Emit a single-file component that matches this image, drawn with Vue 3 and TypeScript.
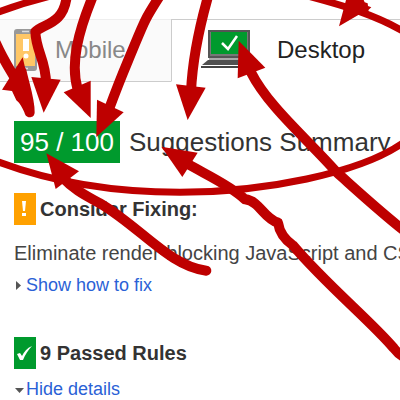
<script setup lang="ts">
import { ref } from 'vue'

type Tab = 'mobile' | 'desktop'

const active = ref<Tab>('desktop')
const score = 95
const passedRules = 9

const strokes: string[] = [
  'M-12 130 C15 190 35 215 60 262',
  'M55 270 C60 290 80 310 89 337 C90 300 72 250 65 215',
  'M200 -10 C190 75 130 70 106 95 C108 155 138 180 138 250',
  'M278 -10 C235 95 210 190 233 268',
  'M478 -10 C430 65 435 60 385 180 C365 228 350 265 328 325',
  'M624 -10 C600 75 578 165 573 275',
  'M619 812 C510 800 420 680 300 610 C265 590 225 573 185 530',
  'M560 490 C610 520 690 555 735 598 C780 603 790 655 834 668 C840 710 870 730 880 737 C975 850 1120 970 1181 1044 Q1195 1062 1210 1070',
  'M752 215 C805 320 920 415 1010 517 C1075 575 1140 635 1210 690',
]

const heads: string[] = [
  '68,172 6,269 36,273 49,301 75,325 102,320',
  '94,231 182,239 131,338',
  '191,277 272,242 272,354',
  '291,299 371,337 289,411',
  '528,253 617,263 563,360',
  '139,460 237,514 167,567',
  '484,440 593,458 547,531',
  '716,122 796,203 713,235',
  '1038,0 1091,0 1094,7 1103,10 1104,18 1114,22 1106,29 1104,38 1080,42 1017,79',
]
</script>

<template>
  <main class="page">
    <nav class="tabs" aria-label="Device">
      <button class="tab mobile" :class="{ active: active === 'mobile' }" type="button" @click="active = 'mobile'">
        <svg class="phone" viewBox="0 0 23 42" aria-hidden="true">
          <rect width="23" height="42" rx="3" fill="#999" />
          <rect x="2" y="5" width="19" height="32" fill="#ffc766" />
          <path d="M8 2.5h7" stroke="#ddd" stroke-width="1.5" />
          <path d="M9 39.5h5" stroke="#ddd" stroke-width="1.5" />
          <path d="M9 10h6v12h-6z" fill="#fff" />
          <circle cx="12" cy="27" r="2.5" fill="#fff" />
        </svg>
        <span>Mobile</span>
      </button>
      <button class="tab desktop" :class="{ active: active === 'desktop' }" type="button" @click="active = 'desktop'">
        <svg class="laptop" viewBox="0 0 52 40" aria-hidden="true">
          <path d="M7 0h42v28H7z" fill="#555" />
          <path d="M9 2h38v24H9z" fill="#777" />
          <path d="M10 2h36v22H10z" fill="#009a2d" />
          <path d="M8 28h40v2H8z" fill="#aaa" />
          <path d="M7 30h43l2 5H1z" fill="#505050" />
          <path d="M0 36h52v2H0z" fill="#444" />
          <path d="M21 13l6 6L36 6" fill="none" stroke="#fff" stroke-width="2.5" />
        </svg>
        <span>Desktop</span>
      </button>
    </nav>

    <section class="report">
      <h1 class="summary">
        <span class="score">{{ score }} / 100</span>
        <span>Suggestions Summary</span>
      </h1>

      <h2 class="group">
        <svg class="badge" viewBox="0 0 22 32" aria-hidden="true">
          <path d="M0 0h22v32H0z" fill="#ffa100" />
          <path d="M8 8h4l-1 10H9z" fill="#fff" />
          <path d="M8 20h4v3H8z" fill="#fff" />
        </svg>
        <span>Consider Fixing:</span>
      </h2>
      <p class="rule">Eliminate render-blocking JavaScript and CS</p>
      <button class="toggle" type="button">
        <svg viewBox="0 0 10 12" aria-hidden="true"><path d="M2 2l5 4.5L2 11z" fill="#555" /></svg>
        <span>Show how to fix</span>
      </button>

      <h2 class="group passed">
        <svg class="badge" viewBox="0 0 22 32" aria-hidden="true">
          <path d="M0 0h22v32H0z" fill="#009a2d" />
          <path d="M3 17l3-1 2 3C10 15 13 11 18 9C14 13 11 18 9 23H6z" fill="#fff" />
        </svg>
        <span>{{ passedRules }} Passed Rules</span>
      </h2>
      <button class="toggle" type="button">
        <svg viewBox="0 0 10 12" aria-hidden="true"><path d="M1 5h9L5.5 10z" fill="#555" /></svg>
        <span>Hide details</span>
      </button>
    </section>

    <svg class="marks" viewBox="0 0 1200 1200" aria-hidden="true">
      <g fill="none" stroke="#be0000" stroke-linecap="round" stroke-linejoin="round">
        <path d="M-10 38Q65 10 145 -10M930 -10C1035 18 1125 45 1210 94M-10 484C150 545 330 577 540 577C790 577 1080 520 1210 428" stroke-width="21" />
        <path v-for="d in strokes" :key="d" :d="d" stroke-width="30" />
      </g>
      <polygon v-for="p in heads" :key="p" :points="p" fill="#be0000" />
    </svg>
  </main>
</template>

<style>
body {
  margin: 0;
  background: #fff;
}
</style>

<style scoped>
.page {
  position: relative;
  overflow: hidden;
  padding-top: 19px;
  font-family: "Liberation Sans", Arial, sans-serif;
  color: #333;
}

button {
  margin: 0;
  border: 0;
  background: none;
  font-family: inherit;
  cursor: pointer;
}

.tabs {
  display: flex;
}

.tab {
  display: flex;
  align-items: center;
  height: 63px;
  box-sizing: border-box;
  padding: 0 0 2px 14px;
  border-top: 1px solid #eee;
  border-bottom: 1px solid #ccc;
  background: #fafafa;
  color: #888;
  font-size: 24px;
  line-height: 28px;
}

.mobile {
  flex: 0 0 171px;
  gap: 18px;
}

.desktop {
  flex: 1;
  gap: 24px;
  padding-left: 29px;
  border-left: 1px solid #ccc;
}

.active {
  border-top-color: #ccc;
  border-bottom-color: transparent;
  background: #fff;
  color: #222;
}

.phone {
  width: 23px;
  height: 42px;
}

.laptop {
  width: 52px;
  height: 40px;
}

.report {
  padding: 39px 0 0 14px;
  white-space: nowrap;
}

.summary {
  display: flex;
  align-items: center;
  gap: 9px;
  margin: 0 0 30px;
  font-size: 26px;
  font-weight: 400;
  line-height: 42px;
}

.score {
  padding: 0 6px;
  background: #009a2d;
  color: #fff;
}

.group {
  display: flex;
  align-items: center;
  gap: 4px;
  margin: 0 0 16px;
  font-size: 20px;
  line-height: 32px;
}

.badge {
  width: 22px;
  height: 32px;
}

.rule {
  margin: 0 0 8px;
  color: #444;
  font-size: 20px;
  line-height: 24px;
}

.toggle {
  display: flex;
  align-items: center;
  gap: 2px;
  padding: 0;
  color: #2a61d6;
  font-size: 18px;
  line-height: 24px;
}

.toggle svg {
  width: 10px;
  height: 12px;
}

.passed {
  margin: 40px 0 8px;
}

.marks {
  position: absolute;
  top: 0;
  left: 0;
  width: 400px;
  height: 400px;
  pointer-events: none;
}
</style>
